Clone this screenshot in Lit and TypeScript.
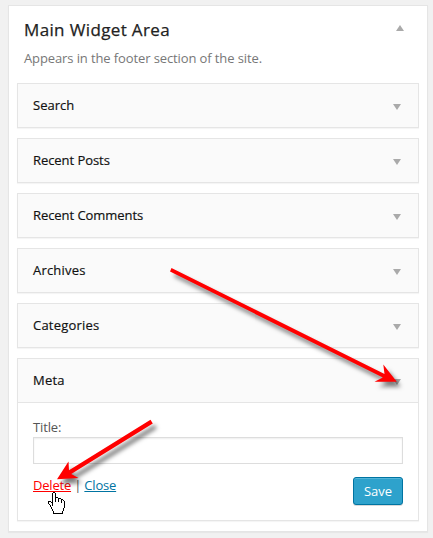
import { LitElement, html, css, svg } from "lit";
import { customElement } from "lit/decorators.js";

const HAND = [
  ".....##..........",
  "....#oo#.........",
  "....#oo#.........",
  "....#oo#.........",
  "....#oo#.........",
  "....#oo###.......",
  "....#oo#oo###....",
  "....#oo#oo#oo##..",
  "....#oo#oo#oo#o#.",
  "###.#oo#oo#oo#oo#",
  "#oo##oooooooo#oo#",
  "#ooo#ooooooooooo#",
  ".#oo#ooooooooooo#",
  "..#o#ooooooooooo#",
  "..#ooooooooooooo#",
  "...#oooooooooooo#",
  "...#ooooooooooo#.",
  "....#oooooooooo#.",
  "....#oooooooooo#.",
  ".....#oooooooo#..",
  ".....#oooooooo#..",
  ".....##########..",
];

const pixels = (mark: string) =>
  HAND.map((row, y) =>
    [...row].map((c, x) => (c === mark ? `M${x} ${y}h1v1h-1z` : "")).join("")
  ).join("");

@customElement("app-root")
export class AppRoot extends LitElement {
  static styles = css`
    :host {
      display: block;
      position: relative;
      box-sizing: border-box;
      height: 538px;
      padding: 5px 4px 6px 8px;
      overflow: hidden;
      background: #f1f1f1;
      color: #555;
      font: 13px/19px "Open Sans", sans-serif;
    }
    .panel {
      box-sizing: border-box;
      width: 420px;
      height: 527px;
      padding: 0 8px;
      background: #fff;
      border: 1px solid #e5e5e5;
      box-shadow: 0 1px 1px rgba(0, 0, 0, 0.04);
    }
    .head {
      display: flex;
      justify-content: space-between;
      padding: 11px 15px 0 7px;
      height: 26px;
    }
    .title {
      margin: 0;
      font-size: 17px;
      line-height: 25px;
      font-weight: 400;
      letter-spacing: 0.36px;
      -webkit-text-stroke: 0.25px #222;
      color: #222;
      white-space: nowrap;
    }
    .desc {
      margin: 5px 0 15px 7px;
      height: 20px;
      line-height: 20px;
      letter-spacing: -0.11px;
      color: #777;
    }
    .list {
      display: flex;
      flex-direction: column;
      gap: 10px;
    }
    .widget {
      border: 1px solid #e5e5e5;
      background: #fff;
      box-shadow: 0 1px 1px rgba(0, 0, 0, 0.04);
    }
    .bar {
      display: flex;
      align-items: center;
      justify-content: space-between;
      height: 43px;
      padding: 0 17px 0 15px;
      background: #fafafa;
      color: #111;
      -webkit-text-stroke: 0.18px #111;
    }
    .bar.tight {
      letter-spacing: -0.06px;
    }
    .bar.loose {
      letter-spacing: 0.2px;
    }
    .tri {
      display: block;
      width: 8px;
      height: 6px;
      fill: #aaa;
      -webkit-text-stroke: 0;
    }
    .bar .tri {
      margin-top: 3px;
    }
    .head .tri {
      margin-top: 8px;
    }
    .body {
      box-sizing: border-box;
      height: 118px;
      padding: 15px 15px 0;
      border-top: 1px solid #e5e5e5;
    }
    .field {
      display: block;
      height: 19px;
      letter-spacing: -0.15px;
    }
    .input {
      display: block;
      box-sizing: border-box;
      width: 100%;
      height: 27px;
      margin: 0;
      border: 1px solid #ddd;
      background: #fff;
      box-shadow: inset 0 1px 2px rgba(0, 0, 0, 0.07);
      outline: none;
    }
    .actions {
      display: flex;
      justify-content: space-between;
      margin-top: 13px;
    }
    .links {
      margin-top: -1px;
      letter-spacing: -0.2px;
    }
    .links a {
      color: #0074a2;
      text-decoration: underline;
    }
    .links a.delete {
      color: #f00;
    }
    .save {
      box-sizing: border-box;
      width: 50px;
      height: 28px;
      padding: 0;
      border: 1px solid #0074a2;
      border-radius: 3px;
      background: #2ea2cc;
      box-shadow: inset 0 1px 0 rgba(120, 200, 230, 0.5),
        0 1px 0 rgba(0, 0, 0, 0.15);
      color: #fff;
      font: 13px/26px "Open Sans", sans-serif;
    }
    .overlay {
      position: absolute;
      left: 0;
      top: 0;
      pointer-events: none;
    }
    .arrow {
      fill: #f00;
      filter: drop-shadow(4px 5px 2px rgba(0, 0, 0, 0.5));
    }
  `;

  private tri(up = false) {
    return html`<svg class="tri" viewBox="0 0 8 6">
      <path d=${up ? "M0 6L4 0L8 6z" : "M0 0H8L4 6z"}></path>
    </svg>`;
  }

  private bar(name: string, fit = "") {
    return html`<div class="bar ${fit}"><span>${name}</span>${this.tri()}</div>`;
  }

  render() {
    const widgets = [
      ["Search", ""],
      ["Recent Posts", "tight"],
      ["Recent Comments", "tight"],
      ["Archives", "loose"],
      ["Categories", "loose"],
    ];
    return html`
      <section class="panel">
        <div class="head">
          <h3 class="title">Main Widget Area</h3>
          ${this.tri(true)}
        </div>
        <p class="desc">Appears in the footer section of the site.</p>
        <div class="list">
          ${widgets.map(([n, fit]) => html`<div class="widget">${this.bar(n, fit)}</div>`)}
          <div class="widget">
            ${this.bar("Meta", "loose")}
            <div class="body">
              <label class="field" for="title">Title:</label>
              <input class="input" id="title" type="text" />
              <div class="actions">
                <div class="links"><a class="delete">Delete</a> | <a>Close</a></div>
                <button class="save">Save</button>
              </div>
            </div>
          </div>
        </div>
      </section>
      <svg class="overlay" width="433" height="538" viewBox="0 0 433 538">
        <path class="arrow" d="M171.5 268L384.5 374L383.3 364.5L396.8 381.8L374.5 381.8L382.8 377.6L170 271.5z"></path>
        <path class="arrow" d="M150.5 419.8L69 470.2L68.5 461.5L57 479.2L78.5 478L71.2 474L152.8 423.5z"></path>
        <g transform="translate(48 492)" shape-rendering="crispEdges">
          ${svg`<path fill="#fff" d=${pixels("o")}></path><path fill="#000" d=${pixels("#")}></path>`}
        </g>
      </svg>
    `;
  }
}
